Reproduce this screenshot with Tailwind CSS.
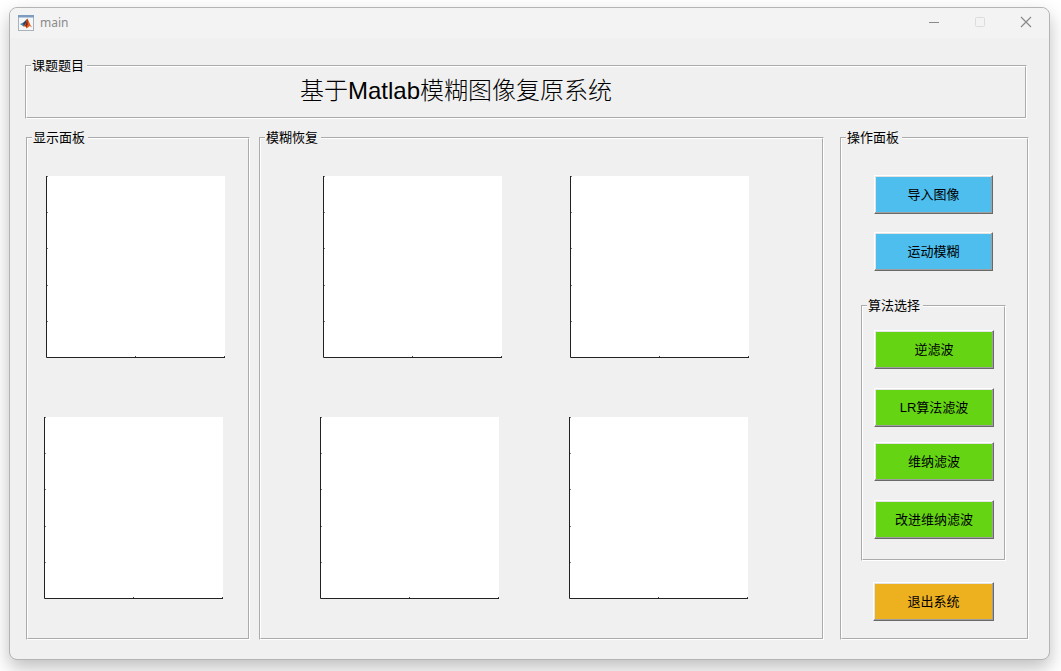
<!DOCTYPE html>
<html lang="zh-CN">
  <head>
    <title>main</title>
    <meta charset="utf-8" />
    <meta name="viewport" content="width=device-width, initial-scale=1" />
    <script src="https://cdn.jsdelivr.net/npm/@tailwindcss/browser@4"></script>
  </head>
  <body
    class="min-h-screen flex flex-col overflow-hidden bg-white pt-[7px] pl-[9px] pr-[11px] pb-[11px] font-['Liberation_Sans','Noto_Sans_CJK_SC',sans-serif] text-[13px] leading-4 text-black"
  >
    <!-- axes shared by every plot -->
    <svg class="hidden">
      <symbol id="axes" viewBox="0 0 179 182">
        <rect width="179" height="182" fill="#fff" />
        <path d="M.5 0V181.5H179" fill="none" stroke="#222" />
        <path d="M1 .5h1M1 36.5h1M1 72.5h1M1 109.5h1M1 145.5h1" stroke="#777" />
        <path d="M89.5 180v1M178.5 180v1" stroke="#444" />
      </symbol>
    </svg>

    <div
      class="flex-1 flex flex-col rounded-lg border border-[#b4b4b4] bg-[#f0f0f0] shadow-[0_8px_18px_rgba(0,0,0,0.25)]"
    >
      <header class="flex items-center h-[30px] rounded-t-lg bg-[#f3f3f3] pl-2 pr-[15px]">
        <svg class="size-4" viewBox="0 0 16 16">
          <rect x=".5" y=".5" width="15" height="15" fill="#f4f6f8" stroke="#a9b1ba" />
          <path d="M0 0h16v2.500H0z" fill="#7c9cc0" />
          <path d="M2 9l3.500-1.500 2 2-2 2z" fill="#4a86b0" />
          <path d="M5 8l4-4-1 5-2 2.500z" fill="#27406a" />
          <path d="M5.500 11.500l2-3 1.700-5c1.500 1 2.300 6 5 9l-2.500-1.500-3 2.500-1.200-2z" fill="#e0601f" />
          <path d="M9.200 3.500l.6 6-1.600 3-.8-2z" fill="#8a2413" />
        </svg>
        <h1 class="ml-1.5 text-xs text-[#8a8a8a] font-['Noto_Sans',sans-serif]">main</h1>
        <div class="ml-auto flex gap-[30px]">
          <button type="button" aria-label="Minimize" class="size-4">
            <svg viewBox="0 0 16 16"><path d="M3 7.500h10" stroke="#8a8a8a" /></svg>
          </button>
          <button type="button" aria-label="Maximize" class="size-4" disabled>
            <svg viewBox="0 0 16 16">
              <rect x="3.500" y="2.500" width="9" height="9" rx="1" fill="none" stroke="#dcdcdc" />
            </svg>
          </button>
          <button type="button" aria-label="Close" class="size-4">
            <svg viewBox="0 0 16 16"><path d="M3 2l10 10M13 2L3 12" stroke="#8a8a8a" stroke-width="1.200" /></svg>
          </button>
        </div>
      </header>

      <main class="flex-1 flex flex-col pt-5 pl-[15px] pr-5 pb-[19px]">
        <fieldset class="h-[61px] mr-0.5 border-2 border-white [border-style:groove]">
          <legend class="ml-1 pl-px pr-[3px]">课题题目</legend>
          <p class="pl-[273px] text-2xl leading-[34px] font-light">基于Matlab模糊图像复原系统</p>
        </fieldset>

        <div class="flex-1 flex mt-[11px] pl-px">
          <fieldset class="w-[224px] border-2 border-white [border-style:groove]">
            <legend class="ml-1 pl-px pr-[3px]">显示面板</legend>
            <div class="flex flex-col gap-[59px] pt-[30px]">
              <svg class="ml-[18px] w-[179px] h-[182px]"><use href="#axes" /></svg>
              <svg class="ml-4 w-[179px] h-[182px]"><use href="#axes" /></svg>
            </div>
          </fieldset>

          <fieldset class="flex-1 ml-[9px] border-2 border-white [border-style:groove]">
            <legend class="ml-1 pl-px pr-[3px]">模糊恢复</legend>
            <div class="flex flex-col gap-[59px] pt-[30px]">
              <div class="flex gap-[68px] pl-[62px]">
                <svg class="w-[179px] h-[182px]"><use href="#axes" /></svg>
                <svg class="w-[179px] h-[182px]"><use href="#axes" /></svg>
              </div>
              <div class="flex gap-[70px] pl-[59px]">
                <svg class="w-[179px] h-[182px]"><use href="#axes" /></svg>
                <svg class="w-[179px] h-[182px]"><use href="#axes" /></svg>
              </div>
            </div>
          </fieldset>

          <fieldset class="w-[189px] ml-4 border-2 border-white [border-style:groove]">
            <legend class="ml-1 pl-px pr-[3px]">操作面板</legend>
            <div class="flex flex-col pl-[19px] pr-[21px] pt-[29px]">
              <div class="flex flex-col gap-[18px] px-[13px]">
                <button
                  type="button"
                  class="h-[39px] border border-t-white border-l-white border-r-[#696969] border-b-[#696969] bg-[#4dbeee] shadow-[inset_-1px_-1px_#a0a0a0,inset_1px_1px_#e3e3e3]"
                >
                  导入图像
                </button>
                <button
                  type="button"
                  class="h-[39px] border border-t-white border-l-white border-r-[#696969] border-b-[#696969] bg-[#4dbeee] shadow-[inset_-1px_-1px_#a0a0a0,inset_1px_1px_#e3e3e3]"
                >
                  运动模糊
                </button>
              </div>
              <fieldset class="mt-[27px] border-2 border-white [border-style:groove]">
                <legend class="ml-1 pl-px pr-[3px]">算法选择</legend>
                <div class="flex flex-col gap-[15px] pl-[11px] pr-2.5 pt-4 pb-5">
                  <div class="flex flex-col gap-[19px]">
                    <button
                      type="button"
                      class="h-[39px] border border-t-white border-l-white border-r-[#696969] border-b-[#696969] bg-[#65d413] shadow-[inset_-1px_-1px_#a0a0a0,inset_1px_1px_#e3e3e3]"
                    >
                      逆滤波
                    </button>
                    <button
                      type="button"
                      class="h-[39px] border border-t-white border-l-white border-r-[#696969] border-b-[#696969] bg-[#65d413] shadow-[inset_-1px_-1px_#a0a0a0,inset_1px_1px_#e3e3e3]"
                    >
                      LR算法滤波
                    </button>
                  </div>
                  <div class="flex flex-col gap-[19px]">
                    <button
                      type="button"
                      class="h-[39px] border border-t-white border-l-white border-r-[#696969] border-b-[#696969] bg-[#65d413] shadow-[inset_-1px_-1px_#a0a0a0,inset_1px_1px_#e3e3e3]"
                    >
                      维纳滤波
                    </button>
                    <button
                      type="button"
                      class="h-[39px] border border-t-white border-l-white border-r-[#696969] border-b-[#696969] bg-[#65d413] shadow-[inset_-1px_-1px_#a0a0a0,inset_1px_1px_#e3e3e3]"
                    >
                      改进维纳滤波
                    </button>
                  </div>
                </div>
              </fieldset>
              <div class="flex flex-col px-3 pt-[21px]">
                <button
                  type="button"
                  class="h-[39px] border border-t-white border-l-white border-r-[#696969] border-b-[#696969] bg-[#edb120] shadow-[inset_-1px_-1px_#a0a0a0,inset_1px_1px_#e3e3e3]"
                >
                  退出系统
                </button>
              </div>
            </div>
          </fieldset>
        </div>
      </main>
    </div>
  </body>
</html>
